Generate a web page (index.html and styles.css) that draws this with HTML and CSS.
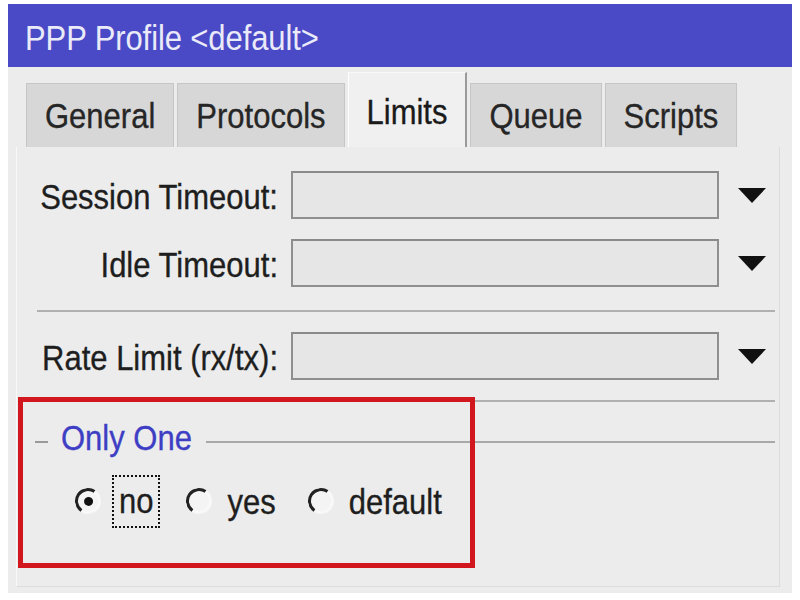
FILE: index.html
```html
<!DOCTYPE html>
<html>
<head>
<meta charset="utf-8">
<link rel="stylesheet" href="styles.css">
</head>
<body>
<div class="window">
  <div class="titlebar"><span class="tx">PPP Profile &lt;default&gt;</span></div>
  <div class="tabs">
    <div class="tab"><span class="tx">General</span></div>
    <div class="tab"><span class="tx">Protocols</span></div>
    <div class="tab active"><span class="tx">Limits</span></div>
    <div class="tab"><span class="tx">Queue</span></div>
    <div class="tab"><span class="tx">Scripts</span></div>
  </div>
  <div class="panel">
    <div class="row">
      <label class="lbl"><span class="tx">Session Timeout:</span></label>
      <div class="input"></div>
      <div class="arrow"></div>
    </div>
    <div class="row row-gap">
      <label class="lbl"><span class="tx">Idle Timeout:</span></label>
      <div class="input"></div>
      <div class="arrow"></div>
    </div>
    <div class="sep"></div>
    <div class="row">
      <label class="lbl"><span class="tx">Rate Limit (rx/tx):</span></label>
      <div class="input"></div>
      <div class="arrow"></div>
    </div>
    <div class="sep sep2"></div>
    <div class="group-head">
      <span class="dash"></span>
      <span class="legend"><span class="tx">Only One</span></span>
      <span class="line"></span>
    </div>
    <div class="radios">
      <div class="radio-item">
        <span class="radio checked"><span class="dot"></span></span>
        <span class="rtext focus"><span class="tx">no</span></span>
      </div>
      <div class="radio-item">
        <span class="radio"></span>
        <span class="rtext"><span class="tx">yes</span></span>
      </div>
      <div class="radio-item">
        <span class="radio"></span>
        <span class="rtext"><span class="tx">default</span></span>
      </div>
    </div>
  </div>
  <div class="highlight"></div>
</div>
</body>
</html>
```
FILE: styles.css
```css
html, body {
  margin: 0;
  padding: 0;
  background: #ffffff;
}
body {
  font-family: "Liberation Sans", Arial, sans-serif;
  font-size: 31px;
  color: #1e1e1e;
}
.tx {
  display: inline-block;
  transform: scaleY(1.14);
  -webkit-text-stroke: 0.3px currentColor;
}
.window {
  position: relative;
  margin: 4px 0 0 8px;
  width: 784px;
  height: 589px;
  background: #ececec;
  display: flex;
  flex-direction: column;
}
.titlebar {
  height: 63px;
  box-sizing: border-box;
  padding: 6px 0 0 17px;
  background: #4a4ac6;
  color: #eaeaf8;
  display: flex;
  align-items: center;
  letter-spacing: -0.1px;
}
.titlebar .tx {
  -webkit-text-stroke: 0;
}
.tabs {
  height: 80px;
  display: flex;
  align-items: flex-end;
  padding-left: 18px;
  gap: 3px;
}
.tab {
  height: 64px;
  box-sizing: border-box;
  padding: 2px 18px 0 18px;
  display: flex;
  align-items: center;
  background: #d7d7d7;
  border: 1px solid #c6c6c6;
  border-bottom: none;
  color: #262626;
}
.tab.active {
  height: 75px;
  padding-top: 5px;
  background: #f0f0f0;
  border-color: #f8f8f8 #9a9a9a #9a9a9a #ffffff;
  border-width: 1px 2px 0 1px;
  color: #1a1a1a;
}
.panel {
  flex: 1;
  margin: 0 12px 6px 8px;
  border-left: 1px solid #f8f8f8;
  border-right: 1px solid #dcdcdc;
  border-bottom: 1px solid #dcdcdc;
  padding: 24px 4px 0 20px;
  display: flex;
  flex-direction: column;
}
.row {
  display: flex;
  align-items: center;
  height: 48px;
}
.row-gap {
  margin-top: 20px;
}
.lbl {
  width: 241px;
  margin-right: 13px;
  text-align: right;
  padding-top: 6px;
  white-space: nowrap;
}
.input {
  width: 428px;
  height: 48px;
  box-sizing: border-box;
  border: 2px solid #8f8f8f;
  border-top-color: #8a8a8a;
  background: #e6e6e6;
}
.arrow {
  margin-left: 19px;
  width: 0;
  height: 0;
  border-left: 14px solid transparent;
  border-right: 14px solid transparent;
  border-top: 15px solid #111111;
}
.sep {
  height: 0;
  border-top: 2px solid #b0b0b0;
  margin: 23px 0 20px 0;
}
.sep2 {
  margin: 20px 0 0 0;
}
.group-head {
  margin-top: 19px;
  height: 36px;
  display: flex;
  align-items: center;
}
.dash {
  width: 13px;
  margin-left: -2px;
  border-top: 2px solid #9a9a9a;
  margin-top: 6px;
}
.legend {
  margin-left: 13px;
  color: #3e3ec4;
}
.line {
  flex: 1;
  margin-left: 14px;
  border-top: 2px solid #a8a8a8;
  margin-top: 6px;
}
.radios {
  margin-top: 19px;
  height: 50px;
  display: flex;
  align-items: center;
  padding-left: 38px;
}
.radio-item {
  display: flex;
  align-items: center;
  margin-right: 26px;
}
.radio-item + .radio-item {
  margin-right: 32px;
}
.radio {
  width: 26px;
  height: 26px;
  box-sizing: border-box;
  border-radius: 50%;
  border: 3px solid;
  border-color: #222222 #f8f8f8 #f8f8f8 #222222;
  background: #f4f4f4;
  display: flex;
  align-items: center;
  justify-content: center;
  transform: rotate(-10deg);
}
.dot {
  width: 9px;
  height: 9px;
  border-radius: 50%;
  background: #111111;
}
.rtext {
  margin-left: 15px;
  padding-top: 4px;
}
.rtext.focus {
  margin-left: 11px;
  padding: 7px 5px 6px 5px;
  border: 2px dotted #111111;
}
.highlight {
  position: absolute;
  left: 10px;
  top: 393px;
  width: 457px;
  height: 171px;
  box-sizing: border-box;
  border: 5px solid #d2161e;
}
```
